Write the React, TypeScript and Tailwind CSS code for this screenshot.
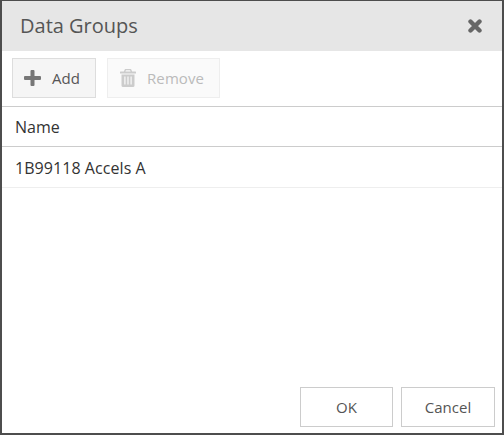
function CloseIcon() {
  return (
    <svg viewBox="0 0 14 14" className="h-[14px] w-[14px] text-[#666]">
      <path d="M2.5 2.5l9 9M11.5 2.5l-9 9" stroke="currentColor" strokeWidth="4.4" strokeLinecap="round" fill="none" />
    </svg>
  );
}

function PlusIcon() {
  return (
    <svg viewBox="0 0 17 16" className="mr-[11px] h-[16px] w-[17px] text-[#777]">
      <path d="M6.5 1a1 1 0 0 1 1-1h2a1 1 0 0 1 1 1v4.9h5.5a1 1 0 0 1 1 1v2.2a1 1 0 0 1-1 1h-5.500v4.900a1 1 0 0 1-1 1h-2a1 1 0 0 1-1-1v-4.900h-5.500a1 1 0 0 1-1-1v-2.200a1 1 0 0 1 1-1h5.500z" fill="currentColor" />
    </svg>
  );
}

function TrashIcon() {
  return (
    <svg viewBox="0 0 16 18" className="mr-[11px] h-[18px] w-[16px] text-[#ccc]">
      <path
        fillRule="evenodd"
        d="M5 0h6l1.200 2.500h3.300a.5.5 0 0 1 .5.5v1.500h-16v-1.500a.5.5 0 0 1 .5-.5h3.300zM6 1.200l-.6 1.300h5.200l-.6-1.300zM1.500 5.500h13v11a1.500 1.500 0 0 1-1.500 1.500h-10a1.500 1.500 0 0 1-1.500-1.500zM4.300 7.500v8h1.200v-8zM7.400 7.500v8h1.200v-8zM10.500 7.500v8h1.200v-8z"
        fill="currentColor"
      />
    </svg>
  );
}

export default function App() {
  return (
    <div className="h-[435px] w-[504px] overflow-hidden bg-[#4d4d4d] pt-px pr-[2px] pb-[2px] pl-[2px] font-['Open_Sans',sans-serif]">
      <div className="flex h-full flex-col bg-white text-[#333]">
        <div className="flex h-[50px] shrink-0 items-center justify-between bg-[#e6e6e6] pl-[18px] pr-[20px]">
          <h1 className="text-[20px] text-[#555]">Data Groups</h1>
          <CloseIcon />
        </div>

        <div className="flex h-[56px] shrink-0 items-start gap-[11px] border-b border-[#ccc] pl-[10px] pt-[7px]">
          <button className="flex h-[40px] w-[84px] items-center border border-[#ddd] bg-[#f5f5f5] pl-[11px] text-[15px] text-[#555]">
            <PlusIcon />
            Add
          </button>
          <button className="flex h-[40px] w-[113px] items-center border border-[#eee] bg-[#fafafa] pl-[12px] text-[15px] tracking-[0.1px] text-[#bbb]">
            <TrashIcon />
            Remove
          </button>
        </div>

        <div className="flex h-[40px] shrink-0 items-center border-b border-[#ccc] pl-[13px] text-[16px]">
          Name
        </div>
        <div className="flex h-[41px] shrink-0 items-center border-b border-[#eee] pl-[13px] pt-px text-[16px] tracking-[0.06px]">
          1B99118 Accels A
        </div>

        <div className="mt-auto flex justify-end gap-[8px] pb-[6px] pr-[7px]">
          <button className="h-[40px] w-[93px] border border-[#ccc] bg-white text-[15px] text-[#555]">OK</button>
          <button className="h-[40px] w-[94px] border border-[#ccc] bg-white text-[15px] text-[#555]">Cancel</button>
        </div>
      </div>
    </div>
  );
}
